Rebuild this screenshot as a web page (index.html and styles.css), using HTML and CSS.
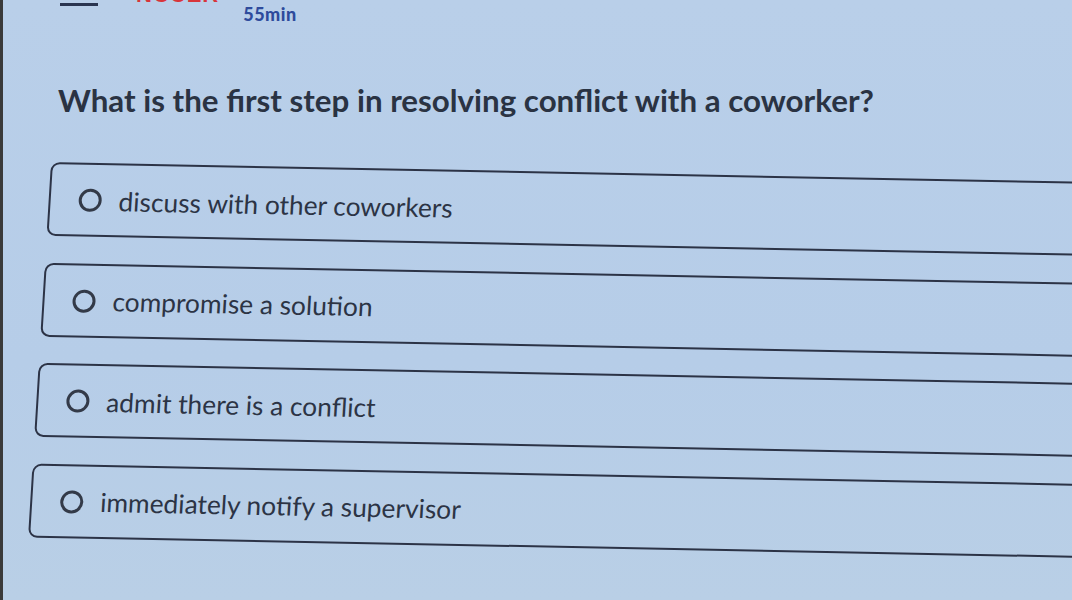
FILE: index.html
```html
<!DOCTYPE html>
<html>
<head>
<meta charset="utf-8">
<link rel="stylesheet" href="styles.css">
</head>
<body>
<div class="screen">
  <div class="topbar">
    <span class="dash"></span>
    <span class="brand">NCCER</span>
    <span class="timer">55min</span>
  </div>
  <h1 class="question">What is the first step in resolving conflict with a coworker?</h1>
  <div class="options">
    <label class="option"><span class="radio"></span><span class="label">discuss with other coworkers</span></label>
    <label class="option"><span class="radio"></span><span class="label">compromise a solution</span></label>
    <label class="option"><span class="radio"></span><span class="label">admit there is a conflict</span></label>
    <label class="option"><span class="radio"></span><span class="label">immediately notify a supervisor</span></label>
  </div>
</div>
</body>
</html>
```
FILE: styles.css
```css
html, body {
  margin: 0;
  padding: 0;
  height: 100%;
  overflow: hidden;
}
body {
  background: #b8cee8;
  font-family: Lato, "Open Sans", sans-serif;
  color: #2b3444;
}
.screen {
  width: 1072px;
  height: 600px;
  overflow: hidden;
  background: linear-gradient(180deg, #b9cfe9 0%, #b6cde8 60%, #b9cfe6 100%);
  border-left: 3px solid #3a3a3a;
  box-sizing: border-box;
}
.topbar {
  height: 26px;
  display: flex;
  align-items: flex-start;
}
.dash {
  display: block;
  width: 38px;
  height: 3px;
  background: #2a3550;
  margin: 3px 0 0 57px;
}
.brand {
  font-family: "Liberation Sans", sans-serif;
  font-weight: 700;
  font-size: 22px;
  color: #d8353b;
  margin: -16px 0 0 38px;
  letter-spacing: 1px;
  line-height: 22px;
}
.timer {
  font-family: Lato, sans-serif;
  font-weight: 900;
  font-size: 18px;
  color: #2e4b9c;
  margin: 4px 0 0 24px;
  line-height: 20px;
  letter-spacing: 0.5px;
}
.question {
  margin: 55px 0 0 55px;
  font-size: 31.3px;
  font-weight: 700;
  line-height: 38px;
  color: #2a3343;
}
.options {
  margin: 43px 0 0 48px;
  display: flex;
  flex-direction: column;
  gap: 26.5px;
  transform-origin: 0 0;
  transform: rotate(1.1deg) skewX(-2.4deg);
}
.option {
  display: flex;
  align-items: center;
  width: 1120px;
  height: 74px;
  border: 2.5px solid #2c3346;
  border-radius: 9px;
  box-sizing: border-box;
  padding-left: 28px;
  padding-top: 1px;
  gap: 17px;
}
.radio {
  width: 23px;
  height: 23px;
  border: 3px solid #333a48;
  border-radius: 50%;
  box-sizing: border-box;
  flex: none;
}
.label {
  font-size: 26.3px;
  color: #2c3445;
  line-height: 30px;
}
```
